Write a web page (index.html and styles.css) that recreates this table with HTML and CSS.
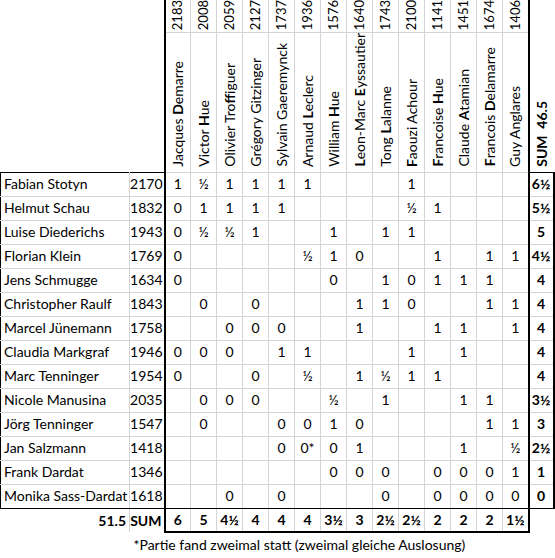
FILE: index.html
```html
<!DOCTYPE html>
<html lang="de">
<head>
    <meta charset="UTF-8">
    <title>Kreuztabelle</title>
    <link rel="stylesheet" href="styles.css">
</head>
<body>

    <table class="sheet">
        <colgroup>
            <col class="c-name">
            <col class="c-rating">
            <col class="c-game"><col class="c-game"><col class="c-game"><col class="c-game"><col class="c-game"><col class="c-game"><col class="c-game">
            <col class="c-game"><col class="c-game"><col class="c-game"><col class="c-game"><col class="c-game"><col class="c-game"><col class="c-game">
            <col class="c-sum">
        </colgroup>
        <thead>
            <tr class="head-rating">
                <th class="corner"></th>
                <th class="corner edge"></th>
                <th class="first"><span class="rot">2183</span></th>
                <th><span class="rot">2008</span></th>
                <th><span class="rot">2059</span></th>
                <th><span class="rot">2127</span></th>
                <th><span class="rot">1737</span></th>
                <th><span class="rot">1936</span></th>
                <th><span class="rot">1576</span></th>
                <th><span class="rot">1640</span></th>
                <th><span class="rot">1743</span></th>
                <th><span class="rot">2100</span></th>
                <th><span class="rot">1141</span></th>
                <th><span class="rot">1451</span></th>
                <th><span class="rot">1674</span></th>
                <th class="last"><span class="rot">1406</span></th>
                <th class="sum-head" rowspan="2"><span class="rot">SUM&nbsp;&nbsp;46.5</span></th>
            </tr>
            <tr class="head-name">
                <th class="corner"></th>
                <th class="corner edge"></th>
                <th class="first"><span class="rot">Jacques <b>D</b>emarre</span></th>
                <th><span class="rot">Victor <b>H</b>ue</span></th>
                <th><span class="rot">Olivier Tro<b>ff</b>iguer</span></th>
                <th><span class="rot">Grégory Gitzinger</span></th>
                <th><span class="rot">Sylvain Gaeremynck</span></th>
                <th><span class="rot">Arnaud <b>L</b>eclerc</span></th>
                <th><span class="rot">William <b>H</b>ue</span></th>
                <th><span class="rot"><b>L</b>eon-Marc <b>E</b>yssautier</span></th>
                <th><span class="rot">Tong <b>L</b>alanne</span></th>
                <th><span class="rot"><b>F</b>aouzi Achour</span></th>
                <th><span class="rot"><b>F</b>rancoise <b>H</b>ue</span></th>
                <th><span class="rot">Claude <b>A</b>tamian</span></th>
                <th><span class="rot"><b>F</b>rancois <b>D</b>elamarre</span></th>
                <th class="last"><span class="rot">Guy Anglares</span></th>
            </tr>
        </thead>
        <tbody>
            <tr class="top">
                <td class="name">Fabian Stotyn</td><td class="rating">2170</td>
                <td>1</td><td>½</td><td>1</td><td>1</td><td>1</td><td>1</td><td></td>
                <td></td><td></td><td>1</td><td></td><td></td><td></td><td class="last"></td>
                <td class="total">6½</td>
            </tr>
            <tr>
                <td class="name">Helmut Schau</td><td class="rating">1832</td>
                <td>0</td><td>1</td><td>1</td><td>1</td><td>1</td><td></td><td></td>
                <td></td><td></td><td>½</td><td>1</td><td></td><td></td><td class="last"></td>
                <td class="total">5½</td>
            </tr>
            <tr>
                <td class="name">Luise Diederichs</td><td class="rating">1943</td>
                <td>0</td><td>½</td><td>½</td><td>1</td><td></td><td></td><td>1</td>
                <td></td><td>1</td><td>1</td><td></td><td></td><td></td><td class="last"></td>
                <td class="total">5</td>
            </tr>
            <tr>
                <td class="name">Florian Klein</td><td class="rating">1769</td>
                <td>0</td><td></td><td></td><td></td><td></td><td>½</td><td>1</td>
                <td>0</td><td></td><td></td><td>1</td><td></td><td>1</td><td class="last">1</td>
                <td class="total">4½</td>
            </tr>
            <tr>
                <td class="name">Jens Schmugge</td><td class="rating">1634</td>
                <td>0</td><td></td><td></td><td></td><td></td><td></td><td>0</td>
                <td></td><td>1</td><td>0</td><td>1</td><td>1</td><td>1</td><td class="last"></td>
                <td class="total">4</td>
            </tr>
            <tr>
                <td class="name">Christopher Raulf</td><td class="rating">1843</td>
                <td></td><td>0</td><td></td><td>0</td><td></td><td></td><td></td>
                <td>1</td><td>1</td><td>0</td><td></td><td></td><td>1</td><td class="last">1</td>
                <td class="total">4</td>
            </tr>
            <tr>
                <td class="name">Marcel Jünemann</td><td class="rating">1758</td>
                <td></td><td></td><td>0</td><td>0</td><td>0</td><td></td><td></td>
                <td>1</td><td></td><td></td><td>1</td><td>1</td><td></td><td class="last">1</td>
                <td class="total">4</td>
            </tr>
            <tr>
                <td class="name">Claudia Markgraf</td><td class="rating">1946</td>
                <td>0</td><td>0</td><td>0</td><td></td><td>1</td><td>1</td><td></td>
                <td></td><td></td><td>1</td><td></td><td>1</td><td></td><td class="last"></td>
                <td class="total">4</td>
            </tr>
            <tr>
                <td class="name">Marc Tenninger</td><td class="rating">1954</td>
                <td>0</td><td></td><td></td><td>0</td><td></td><td>½</td><td></td>
                <td>1</td><td>½</td><td>1</td><td>1</td><td></td><td></td><td class="last"></td>
                <td class="total">4</td>
            </tr>
            <tr>
                <td class="name">Nicole Manusina</td><td class="rating">2035</td>
                <td></td><td>0</td><td>0</td><td>0</td><td></td><td></td><td>½</td>
                <td></td><td>1</td><td></td><td></td><td>1</td><td>1</td><td class="last"></td>
                <td class="total">3½</td>
            </tr>
            <tr>
                <td class="name">Jörg Tenninger</td><td class="rating">1547</td>
                <td></td><td>0</td><td></td><td></td><td>0</td><td>0</td><td>1</td>
                <td>0</td><td></td><td></td><td></td><td></td><td>1</td><td class="last">1</td>
                <td class="total">3</td>
            </tr>
            <tr>
                <td class="name">Jan Salzmann</td><td class="rating">1418</td>
                <td></td><td></td><td></td><td></td><td>0</td><td>0*</td><td>0</td>
                <td>1</td><td></td><td></td><td></td><td>1</td><td></td><td class="last">½</td>
                <td class="total">2½</td>
            </tr>
            <tr>
                <td class="name">Frank Dardat</td><td class="rating">1346</td>
                <td></td><td></td><td></td><td></td><td></td><td></td><td>0</td>
                <td>0</td><td>0</td><td></td><td>0</td><td>0</td><td>0</td><td class="last">1</td>
                <td class="total">1</td>
            </tr>
            <tr class="bottom">
                <td class="name">Monika Sass-Dardat</td><td class="rating">1618</td>
                <td></td><td></td><td>0</td><td></td><td>0</td><td></td><td></td>
                <td></td><td>0</td><td></td><td>0</td><td>0</td><td>0</td><td class="last">0</td>
                <td class="total">0</td>
            </tr>
            <tr class="sums">
                <td class="label">51.5</td><td class="label edge">SUM</td>
                <td>6</td><td>5</td><td>4½</td><td>4</td><td>4</td><td>4</td><td>3½</td>
                <td>3</td><td>2½</td><td>2½</td><td>2</td><td>2</td><td>2</td><td class="last">1½</td>
                <td class="blank"></td>
            </tr>
            <tr class="note-row">
                <td></td>
                <td class="note" colspan="16">*Partie fand zweimal statt (zweimal gleiche Auslosung)</td>
            </tr>
        </tbody>
    </table>

</body>
</html>
```

FILE: styles.css
```css
body {
    margin: 0;
    font-family: Lato, "Liberation Sans", sans-serif;
    font-size: 14px;
    color: #000;
    background-color: #fff;
}

.sheet {
    border-collapse: collapse;
    table-layout: fixed;
    width: 553px;
}

.c-name { width: 129px; }
.c-rating { width: 35px; }
.c-game { width: 26px; }
.c-sum { width: 25px; }

.sheet th,
.sheet td {
    padding: 0;
    border: 1px solid #d4d4d4;
    text-align: center;
    vertical-align: middle;
    font-weight: normal;
    white-space: nowrap;
    line-height: 1;
}

.sheet tbody tr {
    height: 24px;
}

/* rotated headers read bottom to top */
.rot {
    display: inline-block;
    writing-mode: vertical-rl;
    transform: rotate(180deg);
}

.head-rating {
    height: 32px;
}

.head-rating th {
    border-top: none;
    font-size: 13px;
}

.head-name {
    height: 139px;
}

.head-name th {
    vertical-align: bottom;
    padding-bottom: 3px;
}

.sheet th.corner {
    border: none;
}

.sheet th.first {
    border-left: 2px solid #000;
}

.sheet th.last,
.sheet td.last {
    border-right: 2px solid #000;
}

.sheet th.sum-head {
    border-top: none;
    border-right: none;
    border-bottom: 1px solid #000;
    vertical-align: bottom;
    padding-bottom: 3px;
    font-size: 14px;
    font-weight: bold;
}

/* player rows */
.sheet td.name {
    text-align: left;
    padding-left: 3px;
    border-left: 1px solid #000;
}

.sheet td.rating {
    text-align: right;
    padding-right: 1px;
    border-right: 2px solid #000;
}

.top td.name,
.top td.rating {
    border-top: 1px solid #000;
}

.sheet td.total {
    font-weight: bold;
    border-right: 2px solid #000;
}

.top td.total {
    border-top: 1px solid #000;
}

.bottom td {
    border-bottom: 1px solid #000;
}

/* sum row */
.sums td {
    font-weight: bold;
    border-bottom: 2px solid #000;
}

.sheet .sums td.label {
    text-align: right;
    border-left: none;
    border-bottom: none;
    padding-right: 3px;
}

.sheet .sums td.edge {
    border-right: 2px solid #000;
    padding-right: 2px;
}

.sheet .sums td.blank {
    border-right: none;
    border-bottom: none;
}

.note-row td {
    border: none;
    height: 22px;
}

.sheet td.note {
    text-align: left;
    padding-left: 4px;
}
```
